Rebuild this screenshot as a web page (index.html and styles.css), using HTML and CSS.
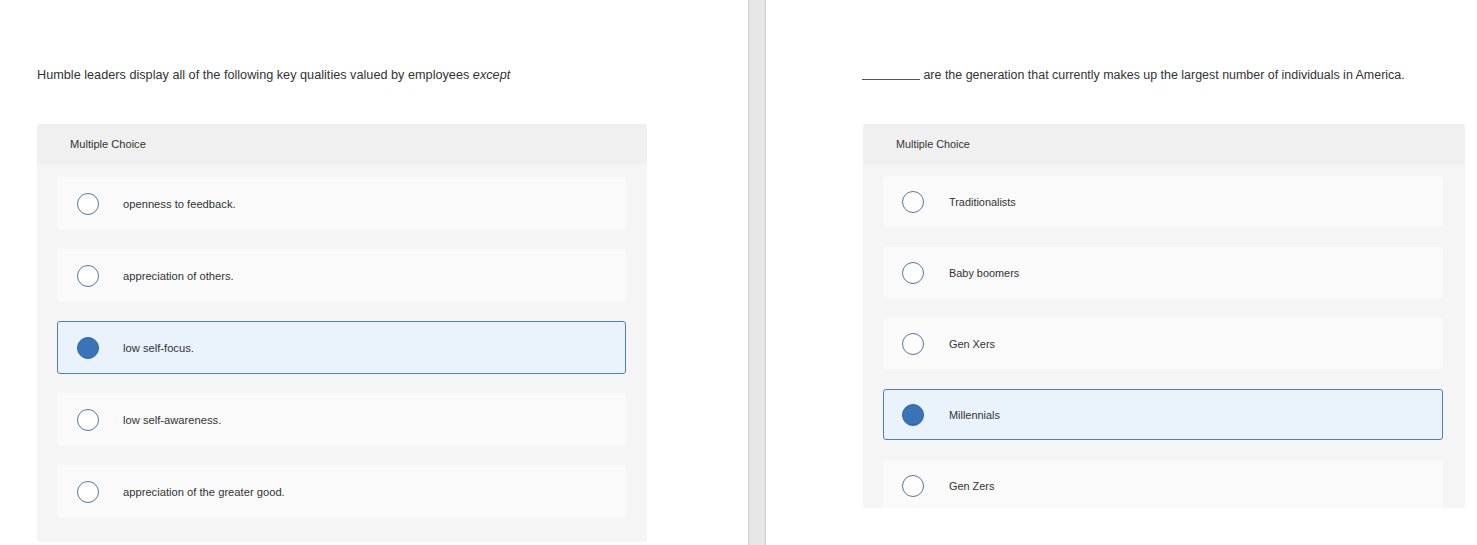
FILE: index.html
```html
<!DOCTYPE html>
<html>
<head>
<meta charset="utf-8">
<link rel="stylesheet" href="styles.css">
</head>
<body>
<div class="page">
  <section class="panel panel-left">
    <p class="question">Humble leaders display all of the following key qualities valued by employees <em>except</em></p>
    <div class="card">
      <div class="card-head">Multiple Choice</div>
      <div class="card-body">
        <div class="option"><span class="radio"></span><span class="label">openness to feedback.</span></div>
        <div class="option"><span class="radio"></span><span class="label">appreciation of others.</span></div>
        <div class="option selected"><span class="radio"></span><span class="label">low self-focus.</span></div>
        <div class="option"><span class="radio"></span><span class="label">low self-awareness.</span></div>
        <div class="option"><span class="radio"></span><span class="label">appreciation of the greater good.</span></div>
      </div>
    </div>
  </section>
  <div class="divider"></div>
  <section class="panel panel-right">
    <p class="question"><span class="blank"></span> are the generation that currently makes up the largest number of individuals in America.</p>
    <div class="card">
      <div class="card-head">Multiple Choice</div>
      <div class="card-body">
        <div class="option"><span class="radio"></span><span class="label">Traditionalists</span></div>
        <div class="option"><span class="radio"></span><span class="label">Baby boomers</span></div>
        <div class="option"><span class="radio"></span><span class="label">Gen Xers</span></div>
        <div class="option selected"><span class="radio"></span><span class="label">Millennials</span></div>
        <div class="option"><span class="radio"></span><span class="label">Gen Zers</span></div>
      </div>
    </div>
  </section>
</div>
</body>
</html>
```

FILE: styles.css
```css
html, body {
  margin: 0;
  padding: 0;
  background: #ffffff;
}
body {
  font-family: "Liberation Sans", Arial, sans-serif;
  color: #333333;
}
.page {
  display: flex;
  width: 1477px;
  height: 545px;
  overflow: hidden;
}
.panel {
  box-sizing: border-box;
}
.panel-left {
  width: 748px;
  padding: 0 101px 0 37px;
}
.panel-right {
  width: 711px;
  padding: 0 12px 0 97px;
  height: 508px;
  overflow: hidden;
}
.divider {
  width: 16px;
  flex: none;
  height: 545px;
  background: #e6e6e6;
  border-left: 1px solid #cfcfcf;
  border-right: 1px solid #cfcfcf;
}
.question {
  margin: 0 0 41px 0;
  padding-top: 67px;
  font-size: 12.7px;
  line-height: 16px;
  color: #333333;
  white-space: nowrap;
}
.panel-right .question {
  font-size: 12.45px;
  margin-left: -1px;
}
.question em {
  font-style: italic;
}
.blank {
  display: inline-block;
  width: 58px;
  height: 11px;
  border-bottom: 1px solid #555555;
  vertical-align: baseline;
  margin-bottom: -1px;
}
.card {
  background: #f5f5f5;
  border-radius: 3px;
  padding-bottom: 24px;
}
.card-head {
  height: 40px;
  display: flex;
  align-items: center;
  padding-left: 33px;
  background: #f0f0f0;
  border-radius: 3px 3px 0 0;
  font-size: 11.1px;
  color: #333333;
}
.panel-right .card-head {
  font-size: 10.8px;
}
.card-body {
  padding: 13px 21px 0 20px;
  display: flex;
  flex-direction: column;
  gap: 19px;
}
.panel-right .card-body {
  padding: 12px 22px 0 20px;
  gap: 20px;
}
.option {
  height: 53px;
  box-sizing: border-box;
  background: #fafafa;
  border: 1px solid #fafafa;
  border-radius: 3px;
  display: flex;
  align-items: center;
  padding-left: 19px;
}
.panel-right .option {
  height: 51px;
  padding-left: 18px;
}
.option.selected {
  background: #eaf2fb;
  border-color: #4a80bd;
}
.radio {
  width: 22px;
  height: 22px;
  box-sizing: border-box;
  border-radius: 50%;
  border: 1.5px solid #55789f;
  background: #ffffff;
  flex: none;
}
.selected .radio {
  background: #3a74b8;
  border-color: #2f63a0;
}
.label {
  margin-left: 24px;
  font-size: 11.2px;
  color: #333333;
}
.panel-right .label {
  margin-left: 25px;
  font-size: 10.9px;
}
```
